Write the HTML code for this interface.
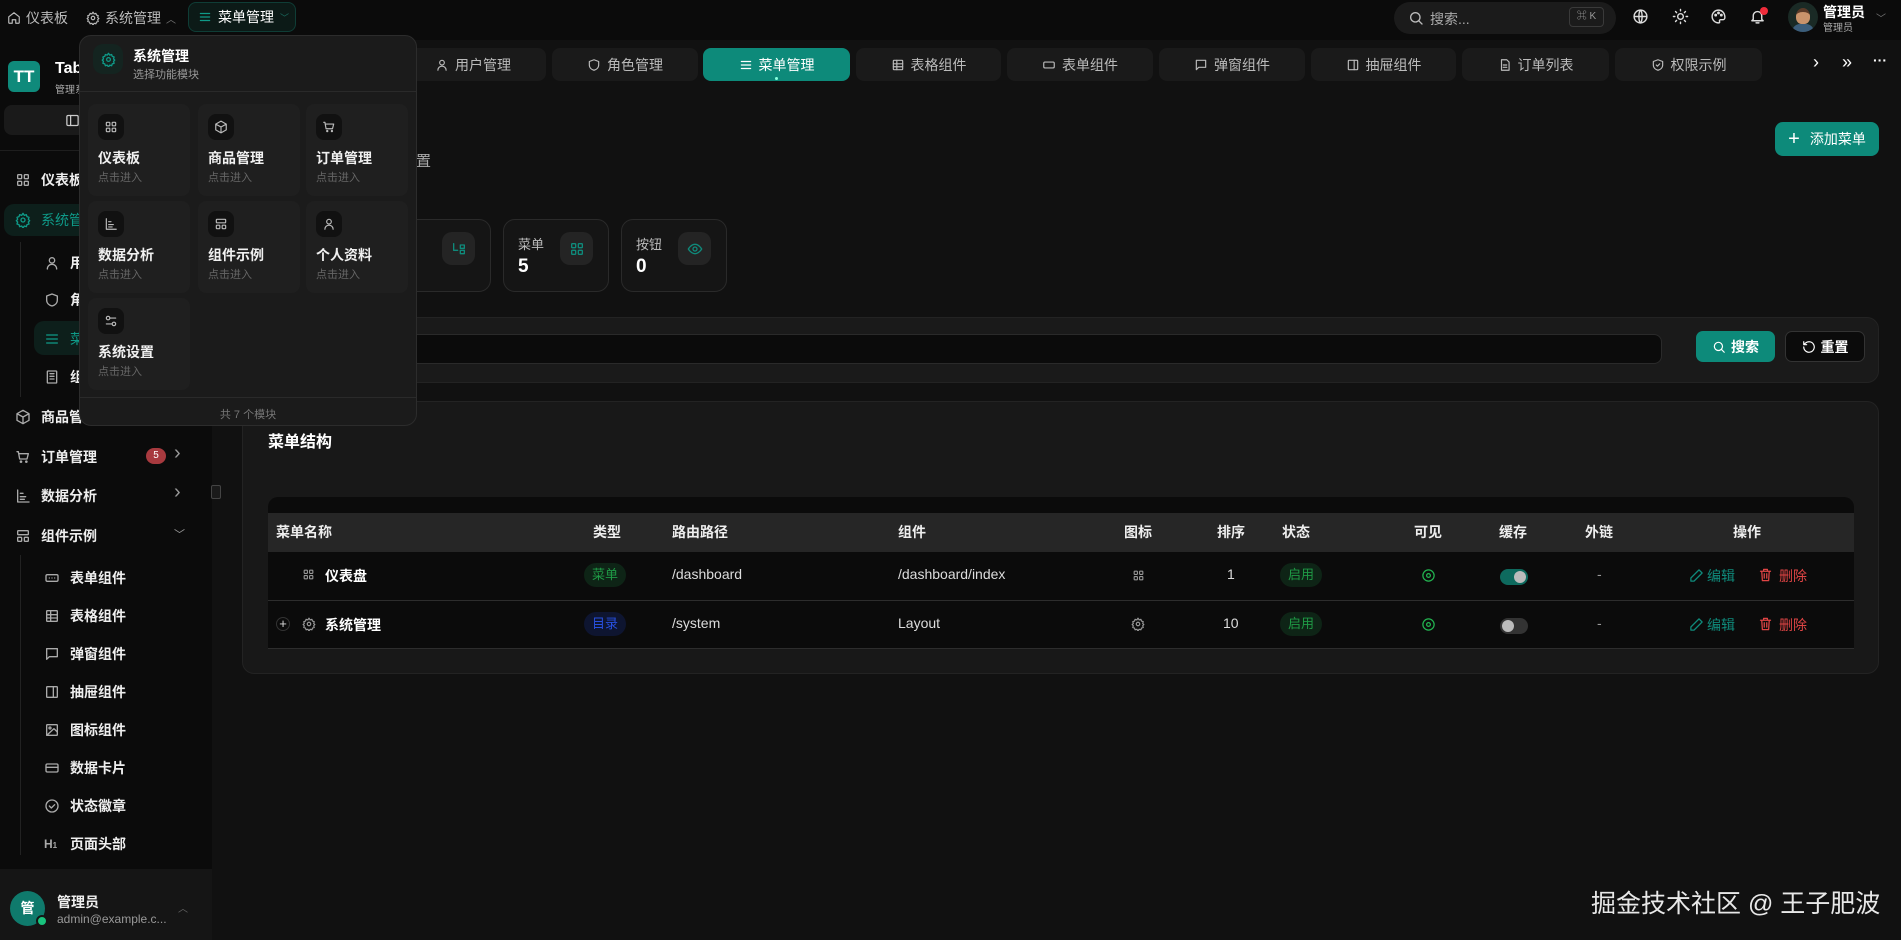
<!DOCTYPE html>
<html><head><meta charset="utf-8"><style>
*{margin:0;padding:0;box-sizing:border-box}
body{width:1901px;height:940px;overflow:hidden;background:#111;font-family:"Liberation Sans","Noto Sans CJK SC",sans-serif;color:#e8e8e8;position:relative;font-size:14px}
.a{position:absolute}
svg{fill:none;stroke:currentColor;stroke-width:2;stroke-linecap:round;stroke-linejoin:round}
.top{left:0;top:0;width:1901px;height:40px;background:#0b0b0b}
.side{left:0;top:40px;width:212px;height:900px;background:#0b0b0b}
.si{position:absolute;display:flex;align-items:center;gap:10px;font-size:14px;color:#eee;font-weight:bold}
.si svg{width:16px;height:16px;color:#aaa}
.tab{position:absolute;top:48px;height:33px;background:#1a1a1a;border-radius:8px;display:flex;align-items:center;justify-content:center;gap:6px;color:#bbb;font-size:14px}
.tab svg{width:14px;height:14px}
.card{position:absolute;top:219px;width:106px;height:73px;border:1px solid #2a2a2a;border-radius:12px;background:#151515}
.card .l{position:absolute;left:14px;top:14px;font-size:13px;color:#bbb}
.card .v{position:absolute;left:14px;top:36px;font-size:19px;font-weight:bold;color:#fff}
.card .ic{position:absolute;left:56px;top:12px;width:33px;height:33px;border-radius:10px;background:#242424;color:#0f8a7b;display:flex;align-items:center;justify-content:center}
.card .ic svg{width:16px;height:16px}
.th{position:absolute;top:513px;height:39px;line-height:39px;font-weight:bold;font-size:14px;color:#eee}
.td{position:absolute;font-size:14px;color:#ddd}
.dd{left:79px;top:35px;width:338px;height:391px;background:#1b1b1b;border:1px solid #2c2c2c;border-radius:12px}
.cell{position:absolute;width:102px;height:92px;background:#1f1f1f;border-radius:8px}
.cell .ib{position:absolute;left:10px;top:10px;width:26px;height:26px;border-radius:8px;background:#111;color:#bbb;display:flex;align-items:center;justify-content:center}
.cell .ib svg{width:14px;height:14px}
.cell .t{position:absolute;left:10px;top:44px;font-size:14px;font-weight:bold;color:#f0f0f0}
.cell .s{position:absolute;left:10px;top:65px;font-size:11px;color:#666}
.tag{position:absolute;height:24px;line-height:24px;padding:0 8px;border-radius:12px;font-size:13px}
</style></head><body>
<div class="a top"></div>
<div class="a" style="left:7px;top:8px;display:flex;align-items:center;gap:5px;color:#bbb;font-size:14px"><svg width="14" height="14" viewBox="0 0 24 24"><path d="M3 10l9-7 9 7v10a1 1 0 0 1-1 1h-5v-6H9v6H4a1 1 0 0 1-1-1z"/></svg>仪表板</div>
<div class="a" style="left:86px;top:8px;display:flex;align-items:center;gap:5px;color:#bbb;font-size:14px"><svg width="14" height="14" viewBox="0 0 24 24"><circle cx="12" cy="12" r="3"/><path d="M12 2l2 3 3-1 1 3 3 1-1 3 2 2-2 2 1 3-3 1-1 3-3-1-2 3-2-3-3 1-1-3-3-1 1-3-2-2 2-2-1-3 3-1 1-3 3 1z"/></svg>系统管理 <span style="font-size:10px;color:#777">︿</span></div>
<div class="a" style="left:188px;top:2px;width:108px;height:30px;border:1px solid #0f3d36;border-radius:8px;background:#0c1a17;display:flex;align-items:center;gap:6px;padding-left:9px;font-size:14px;color:#fff"><svg width="14" height="14" viewBox="0 0 24 24" style="color:#0f9a88"><path d="M4 6h16M4 12h16M4 18h16"/></svg>菜单管理 <span style="font-size:9px;color:#1a6a5e">﹀</span></div>
<div class="a" style="left:1394px;top:2px;width:222px;height:32px;border-radius:16px;background:#1b1b1b"></div>
<svg class="a" style="left:1408px;top:10px;color:#bbb" width="16" height="16" viewBox="0 0 24 24"><circle cx="11" cy="11" r="7"/><path d="M21 21l-5-5"/></svg>
<div class="a" style="left:1430px;top:9px;font-size:14px;color:#aaa">搜索...</div>
<div class="a" style="left:1569px;top:7px;width:35px;height:20px;border:1px solid #3a3a3a;border-radius:4px;font-size:10px;color:#999;text-align:center;line-height:18px">⌘ K</div>
<svg class="a" style="left:1632px;top:8px;color:#ddd" width="17" height="17" viewBox="0 0 24 24"><circle cx="12" cy="12" r="9"/><path d="M3 12h18M12 3c3 3 3 15 0 18M12 3c-3 3-3 15 0 18"/></svg>
<svg class="a" style="left:1672px;top:8px;color:#ddd" width="17" height="17" viewBox="0 0 24 24"><circle cx="12" cy="12" r="4"/><path d="M12 2v2M12 20v2M2 12h2M20 12h2M5 5l1.5 1.5M17.5 17.5L19 19M5 19l1.5-1.5M17.5 6.5L19 5"/></svg>
<svg class="a" style="left:1710px;top:8px;color:#ddd" width="17" height="17" viewBox="0 0 24 24"><path d="M12 3a9 9 0 1 0 0 18c1.5 0 2-1 1.5-2s0-2.5 1.5-2.5H18a3 3 0 0 0 3-3C21 7 17 3 12 3z"/><circle cx="8" cy="10" r="1"/><circle cx="12" cy="7" r="1"/><circle cx="16" cy="10" r="1"/></svg>
<svg class="a" style="left:1749px;top:8px;color:#ddd" width="17" height="17" viewBox="0 0 24 24"><path d="M6 16V11a6 6 0 0 1 12 0v5l2 2H4zM10 21h4"/></svg>
<div class="a" style="left:1760px;top:7px;width:8px;height:8px;border-radius:50%;background:#ef2b3a"></div>
<div class="a" style="left:1788px;top:2px;width:30px;height:30px;border-radius:50%;background:#1a2a25;overflow:hidden"><div style="margin:6px auto 0;width:14px;height:16px;border-radius:50% 50% 40% 40%;background:#c9936b;border-top:4px solid #5a3a28"></div><div style="margin:0 auto;width:22px;height:8px;border-radius:8px 8px 0 0;background:#3b5d7a"></div></div>
<div class="a" style="left:1823px;top:2px;font-size:14px;font-weight:bold;color:#fff">管理员</div>
<div class="a" style="left:1823px;top:19px;font-size:10px;color:#aaa">管理员</div>
<div class="a" style="left:1876px;top:10px;font-size:10px;color:#777">﹀</div>

<div class="a side"></div>
<div class="a" style="left:8px;top:61px;width:32px;height:31px;border-radius:6px;background:#0f8a7b;color:#fff;font-weight:bold;font-size:17px;text-align:center;line-height:31px">TT</div>
<div class="a" style="left:55px;top:60px;font-weight:bold;font-size:16px;color:#fff">Tab</div>
<div class="a" style="left:55px;top:81px;font-size:10px;color:#aaa">管理系</div>
<div class="a" style="left:4px;top:105px;width:204px;height:30px;border-radius:8px;background:#1a1a1a"></div>
<svg class="a" style="left:65px;top:113px;color:#ccc" width="15" height="15" viewBox="0 0 24 24"><rect x="3" y="4" width="18" height="16" rx="2"/><path d="M9 4v16"/></svg>
<div class="a" style="left:0;top:150px;width:212px;height:1px;background:#1e1e1e"></div>
<div class="si" style="left:15px;top:170px"><svg viewBox="0 0 24 24"><rect x="4" y="4" width="6" height="6" rx="1"/><rect x="14" y="4" width="6" height="6" rx="1"/><rect x="4" y="14" width="6" height="6" rx="1"/><rect x="14" y="14" width="6" height="6" rx="1"/></svg>仪表板</div>
<div class="a" style="left:4px;top:204px;width:202px;height:32px;border-radius:10px;background:#0d1f1b"></div>
<div class="si" style="left:15px;top:210px;color:#0f9a88;font-weight:normal"><svg viewBox="0 0 24 24" style="color:#0f9a88"><circle cx="12" cy="12" r="3"/><path d="M12 2l2 3 3-1 1 3 3 1-1 3 2 2-2 2 1 3-3 1-1 3-3-1-2 3-2-3-3 1-1-3-3-1 1-3-2-2 2-2-1-3 3-1 1-3 3 1z"/></svg>系统管理</div>
<div class="a" style="left:20px;top:242px;width:1px;height:155px;background:#222"></div>
<div class="si" style="left:44px;top:253px"><svg viewBox="0 0 24 24"><circle cx="12" cy="8" r="4"/><path d="M5 21c0-4 3-7 7-7s7 3 7 7"/></svg>用</div>
<div class="si" style="left:44px;top:290px"><svg viewBox="0 0 24 24"><path d="M12 3l8 3v6c0 5-4 8-8 9-4-1-8-4-8-9V6z"/></svg>角</div>
<div class="a" style="left:34px;top:321px;width:172px;height:34px;border-radius:10px;background:#0d1f1b"></div>
<div class="si" style="left:44px;top:329px;color:#0f9a88;font-weight:normal"><svg viewBox="0 0 24 24" style="color:#0f9a88"><path d="M4 6h16M4 12h16M4 18h16"/></svg>菜</div>
<div class="si" style="left:44px;top:367px"><svg viewBox="0 0 24 24"><rect x="5" y="3" width="14" height="18" rx="1"/><path d="M9 7h6M9 11h6M9 15h6"/></svg>组</div>
<div class="si" style="left:15px;top:407px"><svg viewBox="0 0 24 24"><path d="M12 2l9 5v10l-9 5-9-5V7z M3 7l9 5 9-5M12 12v10"/></svg>商品管</div>
<div class="si" style="left:15px;top:447px"><svg viewBox="0 0 24 24"><path d="M3 4h2l2 11h11l2-8H6"/><circle cx="9" cy="19" r="1"/><circle cx="17" cy="19" r="1"/></svg>订单管理</div>
<div class="a" style="left:146px;top:448px;width:20px;height:16px;border-radius:8px;background:#a83a3f;color:#fff;font-size:10px;text-align:center;line-height:16px">5</div>
<div class="a" style="left:174px;top:442px;color:#999;font-size:20px">›</div>
<div class="si" style="left:15px;top:486px"><svg viewBox="0 0 24 24"><path d="M4 3v18h17M8 8h4M8 13h8M8 17h6"/></svg>数据分析</div>
<div class="a" style="left:174px;top:481px;color:#999;font-size:20px">›</div>
<div class="a" style="left:211px;top:485px;width:10px;height:14px;border:1px solid #444;border-radius:2px;background:#1a1a1a"></div>
<div class="si" style="left:15px;top:526px"><svg viewBox="0 0 24 24"><rect x="4" y="4" width="16" height="6" rx="1"/><rect x="4" y="14" width="6" height="6" rx="1"/><rect x="14" y="14" width="6" height="6" rx="1"/></svg>组件示例</div>
<div class="a" style="left:174px;top:526px;color:#999;font-size:11px">﹀</div>
<div class="a" style="left:20px;top:555px;width:1px;height:300px;background:#222"></div>
<div class="si" style="left:44px;top:568px"><svg viewBox="0 0 24 24"><rect x="3" y="7" width="18" height="10" rx="2"/><path d="M8 12h.01M12 12h.01M16 12h.01"/></svg>表单组件</div>
<div class="si" style="left:44px;top:606px"><svg viewBox="0 0 24 24"><rect x="4" y="4" width="16" height="16" rx="1"/><path d="M4 10h16M4 15h16M10 4v16"/></svg>表格组件</div>
<div class="si" style="left:44px;top:644px"><svg viewBox="0 0 24 24"><path d="M4 4h16v12H8l-4 4z"/></svg>弹窗组件</div>
<div class="si" style="left:44px;top:682px"><svg viewBox="0 0 24 24"><rect x="4" y="4" width="16" height="16" rx="1"/><path d="M14 4v16"/></svg>抽屉组件</div>
<div class="si" style="left:44px;top:720px"><svg viewBox="0 0 24 24"><rect x="4" y="4" width="16" height="16" rx="1"/><circle cx="9" cy="9" r="1.5"/><path d="M20 15l-5-5-11 10"/></svg>图标组件</div>
<div class="si" style="left:44px;top:758px"><svg viewBox="0 0 24 24"><rect x="3" y="6" width="18" height="12" rx="2"/><path d="M3 11h18"/></svg>数据卡片</div>
<div class="si" style="left:44px;top:796px"><svg viewBox="0 0 24 24"><circle cx="12" cy="12" r="9"/><path d="M8 12l3 3 5-5"/></svg>状态徽章</div>
<div class="si" style="left:44px;top:834px"><span style="width:16px;color:#aaa;font-size:12px;font-weight:bold">H<small style="font-size:8px">1</small></span>页面头部</div>
<div class="a" style="left:0;top:869px;width:212px;height:71px;background:#151515"></div>
<div class="a" style="left:10px;top:891px;width:35px;height:35px;border-radius:50%;background:#0f7a6c;color:#fff;font-weight:bold;font-size:14px;text-align:center;line-height:35px">管</div>
<div class="a" style="left:36px;top:915px;width:12px;height:12px;border-radius:50%;background:#19c37d;border:2px solid #151515"></div>
<div class="a" style="left:57px;top:892px;font-size:14px;font-weight:bold;color:#eee">管理员</div>
<div class="a" style="left:57px;top:912px;font-size:12px;color:#999">admin@example.c...</div>
<div class="a" style="left:178px;top:900px;font-size:10px;color:#666">︿</div>

<div class="tab" style="left:400px;width:146px"><svg viewBox="0 0 24 24"><circle cx="12" cy="8" r="4"/><path d="M5 21c0-4 3-7 7-7s7 3 7 7"/></svg>用户管理</div>
<div class="tab" style="left:552px;width:146px"><svg viewBox="0 0 24 24"><path d="M12 3l8 3v6c0 5-4 8-8 9-4-1-8-4-8-9V6z"/></svg>角色管理</div>
<div class="tab" style="left:703px;width:147px;background:#0d8a7a;color:#fff"><svg viewBox="0 0 24 24"><path d="M4 6h16M4 12h16M4 18h16"/></svg>菜单管理</div>
<div class="a" style="left:775px;top:77px;width:3px;height:3px;border-radius:50%;background:#8fd"></div>
<div class="tab" style="left:856px;width:145px"><svg viewBox="0 0 24 24"><rect x="4" y="4" width="16" height="16" rx="1"/><path d="M4 10h16M4 15h16M10 4v16"/></svg>表格组件</div>
<div class="tab" style="left:1007px;width:146px"><svg viewBox="0 0 24 24"><rect x="3" y="7" width="18" height="10" rx="2"/></svg>表单组件</div>
<div class="tab" style="left:1159px;width:146px"><svg viewBox="0 0 24 24"><path d="M4 4h16v12H8l-4 4z"/></svg>弹窗组件</div>
<div class="tab" style="left:1311px;width:145px"><svg viewBox="0 0 24 24"><rect x="4" y="4" width="16" height="16" rx="1"/><path d="M14 4v16"/></svg>抽屉组件</div>
<div class="tab" style="left:1462px;width:147px"><svg viewBox="0 0 24 24"><path d="M6 3h9l4 4v14H6zM9 12h6M9 16h6"/></svg>订单列表</div>
<div class="tab" style="left:1615px;width:147px"><svg viewBox="0 0 24 24"><path d="M12 3l8 3v6c0 5-4 8-8 9-4-1-8-4-8-9V6z"/><path d="M9 12l2 2 4-4"/></svg>权限示例</div>
<div class="a" style="left:1813px;top:52px;font-size:18px;color:#fff">›</div>
<div class="a" style="left:1842px;top:52px;font-size:18px;color:#fff">»</div>
<div class="a" style="left:1873px;top:52px;font-size:14px;color:#fff;font-weight:bold">···</div>

<div class="a" style="left:416px;top:150px;font-size:15px;color:#aaa">置</div>
<div class="a" style="left:1775px;top:122px;width:104px;height:34px;border-radius:8px;background:#0d8a7a;color:#fff;font-size:14px;display:flex;align-items:center;justify-content:center;gap:10px"><span style="font-size:20px;font-weight:300">+</span>添加菜单</div>
<div class="card" style="left:385px"><div class="l">录</div><div class="ic"><svg viewBox="0 0 24 24"><path d="M4 4v10h6M14 6h6v5h-6zM14 14h6v5h-6z"/></svg></div></div>
<div class="card" style="left:503px"><div class="l">菜单</div><div class="v">5</div><div class="ic"><svg viewBox="0 0 24 24"><rect x="4" y="4" width="6" height="6" rx="1"/><rect x="14" y="4" width="6" height="6" rx="1"/><rect x="4" y="14" width="6" height="6" rx="1"/><rect x="14" y="14" width="6" height="6" rx="1"/></svg></div></div>
<div class="card" style="left:621px"><div class="l">按钮</div><div class="v">0</div><div class="ic"><svg viewBox="0 0 24 24"><path d="M2 12s4-7 10-7 10 7 10 7-4 7-10 7S2 12 2 12z"/><circle cx="12" cy="12" r="3"/></svg></div></div>

<div class="a" style="left:242px;top:317px;width:1637px;height:66px;border:1px solid #232323;border-radius:12px;background:#1a1a1a"></div>
<div class="a" style="left:260px;top:334px;width:1402px;height:30px;border:1px solid #2a2a2a;border-radius:8px;background:#0b0b0b"></div>
<div class="a" style="left:1696px;top:331px;width:79px;height:31px;border-radius:7px;background:#0d8a7a;color:#fff;font-size:14px;display:flex;align-items:center;justify-content:center;gap:5px;font-weight:bold"><svg width="14" height="14" viewBox="0 0 24 24"><circle cx="11" cy="11" r="7"/><path d="M21 21l-5-5"/></svg>搜索</div>
<div class="a" style="left:1785px;top:331px;width:80px;height:31px;border-radius:7px;background:#0b0b0b;border:1px solid #333;color:#fff;font-size:14px;display:flex;align-items:center;justify-content:center;gap:5px;font-weight:bold"><svg width="14" height="14" viewBox="0 0 24 24"><path d="M3 12a9 9 0 1 0 3-6.7L3 8M3 3v5h5"/></svg>重置</div>

<div class="a" style="left:242px;top:401px;width:1637px;height:273px;border:1px solid #232323;border-radius:12px;background:#181818"></div>
<div class="a" style="left:268px;top:428px;font-size:16px;font-weight:bold;color:#fff">菜单结构</div>
<div class="a" style="left:268px;top:497px;width:1586px;height:152px;border-radius:10px 10px 0 0;background:#0b0b0b;overflow:hidden">
  <div class="a" style="left:0;top:16px;width:1586px;height:39px;background:#262626"></div>
  <div class="a" style="left:0;top:103px;width:1586px;height:1px;background:#2d2d2d"></div>
  <div class="a" style="left:0;top:151px;width:1586px;height:1px;background:#2d2d2d"></div>
</div>
<div class="th" style="left:276px">菜单名称</div>
<div class="th" style="left:593px">类型</div>
<div class="th" style="left:672px">路由路径</div>
<div class="th" style="left:898px">组件</div>
<div class="th" style="left:1124px">图标</div>
<div class="th" style="left:1217px">排序</div>
<div class="th" style="left:1282px">状态</div>
<div class="th" style="left:1414px">可见</div>
<div class="th" style="left:1499px">缓存</div>
<div class="th" style="left:1585px">外链</div>
<div class="th" style="left:1733px">操作</div>
<svg class="a" style="left:302px;top:568px;color:#999" width="13" height="13" viewBox="0 0 24 24"><rect x="4" y="4" width="6" height="6" rx="1"/><rect x="14" y="4" width="6" height="6" rx="1"/><rect x="4" y="14" width="6" height="6" rx="1"/><rect x="14" y="14" width="6" height="6" rx="1"/></svg>
<div class="td" style="left:325px;top:566px;font-weight:bold;color:#fff">仪表盘</div>
<div class="tag" style="left:584px;top:563px;background:#0e2416;color:#1f9a45">菜单</div>
<div class="td" style="left:672px;top:566px">/dashboard</div>
<div class="td" style="left:898px;top:566px">/dashboard/index</div>
<svg class="a" style="left:1132px;top:569px;color:#999" width="13" height="13" viewBox="0 0 24 24"><rect x="4" y="4" width="6" height="6" rx="1"/><rect x="14" y="4" width="6" height="6" rx="1"/><rect x="4" y="14" width="6" height="6" rx="1"/><rect x="14" y="14" width="6" height="6" rx="1"/></svg>
<div class="td" style="left:1227px;top:566px">1</div>
<div class="tag" style="left:1280px;top:563px;background:#0e2416;color:#1f9a45">启用</div>
<svg class="a" style="left:1421px;top:568px;color:#22b350" width="15" height="15" viewBox="0 0 24 24"><circle cx="12" cy="12" r="9"/><circle cx="12" cy="12" r="3"/></svg>
<div class="a" style="left:1500px;top:569px;width:28px;height:16px;border-radius:8px;background:#0e6a5e"><div style="position:absolute;right:2px;top:2px;width:12px;height:12px;border-radius:50%;background:#bbb"></div></div>
<div class="td" style="left:1597px;top:566px;color:#999">-</div>
<svg class="a" style="left:1689px;top:568px;color:#0f8a7b" width="15" height="15" viewBox="0 0 24 24"><path d="M16 3l5 5L8 21H3v-5z"/></svg>
<div class="td" style="left:1707px;top:566px;color:#0f8a7b">编辑</div>
<svg class="a" style="left:1758px;top:567px;color:#e04545" width="15" height="16" viewBox="0 0 24 24"><path d="M4 6h16M9 6V3h6v3M6 6l1 15h10l1-15M10 10v7M14 10v7"/></svg>
<div class="td" style="left:1779px;top:566px;color:#e04545">删除</div>
<div class="a" style="left:276px;top:617px;width:14px;height:14px;border-radius:50%;border:1px solid #333;color:#ddd;font-size:13px;line-height:12px;text-align:center">+</div>
<svg class="a" style="left:302px;top:617px;color:#999" width="14" height="14" viewBox="0 0 24 24"><circle cx="12" cy="12" r="3"/><path d="M12 2l2 3 3-1 1 3 3 1-1 3 2 2-2 2 1 3-3 1-1 3-3-1-2 3-2-3-3 1-1-3-3-1 1-3-2-2 2-2-1-3 3-1 1-3 3 1z"/></svg>
<div class="td" style="left:325px;top:615px;font-weight:bold;color:#fff">系统管理</div>
<div class="tag" style="left:584px;top:612px;background:#0e1530;color:#2750e0">目录</div>
<div class="td" style="left:672px;top:615px">/system</div>
<div class="td" style="left:898px;top:615px">Layout</div>
<svg class="a" style="left:1131px;top:617px;color:#999" width="14" height="14" viewBox="0 0 24 24"><circle cx="12" cy="12" r="3"/><path d="M12 2l2 3 3-1 1 3 3 1-1 3 2 2-2 2 1 3-3 1-1 3-3-1-2 3-2-3-3 1-1-3-3-1 1-3-2-2 2-2-1-3 3-1 1-3 3 1z"/></svg>
<div class="td" style="left:1223px;top:615px">10</div>
<div class="tag" style="left:1280px;top:612px;background:#0e2416;color:#1f9a45">启用</div>
<svg class="a" style="left:1421px;top:617px;color:#22b350" width="15" height="15" viewBox="0 0 24 24"><circle cx="12" cy="12" r="9"/><circle cx="12" cy="12" r="3"/></svg>
<div class="a" style="left:1500px;top:618px;width:28px;height:16px;border-radius:8px;background:#333"><div style="position:absolute;left:2px;top:2px;width:12px;height:12px;border-radius:50%;background:#bbb"></div></div>
<div class="td" style="left:1597px;top:615px;color:#999">-</div>
<svg class="a" style="left:1689px;top:617px;color:#0f8a7b" width="15" height="15" viewBox="0 0 24 24"><path d="M16 3l5 5L8 21H3v-5z"/></svg>
<div class="td" style="left:1707px;top:615px;color:#0f8a7b">编辑</div>
<svg class="a" style="left:1758px;top:616px;color:#e04545" width="15" height="16" viewBox="0 0 24 24"><path d="M4 6h16M9 6V3h6v3M6 6l1 15h10l1-15M10 10v7M14 10v7"/></svg>
<div class="td" style="left:1779px;top:615px;color:#e04545">删除</div>

<div class="a" style="left:1591px;top:884px;font-size:25px;color:#e8e8e8">掘金技术社区 @ 王子肥波</div>

<div class="a dd">
  <div class="a" style="left:13px;top:8px;width:30px;height:30px;border-radius:10px;background:#142420;color:#0f9a88;display:flex;align-items:center;justify-content:center"><svg width="15" height="15" viewBox="0 0 24 24"><circle cx="12" cy="12" r="3"/><path d="M12 2l2 3 3-1 1 3 3 1-1 3 2 2-2 2 1 3-3 1-1 3-3-1-2 3-2-3-3 1-1-3-3-1 1-3-2-2 2-2-1-3 3-1 1-3 3 1z"/></svg></div>
  <div class="a" style="left:53px;top:10px;font-size:14px;font-weight:bold;color:#fff">系统管理</div>
  <div class="a" style="left:53px;top:30px;font-size:11px;color:#999">选择功能模块</div>
  <div class="a" style="left:0;top:55px;width:336px;height:1px;background:#2a2a2a"></div>
  <div class="cell" style="left:8px;top:68px"><div class="ib"><svg viewBox="0 0 24 24"><rect x="4" y="4" width="6" height="6" rx="1"/><rect x="14" y="4" width="6" height="6" rx="1"/><rect x="4" y="14" width="6" height="6" rx="1"/><rect x="14" y="14" width="6" height="6" rx="1"/></svg></div><div class="t">仪表板</div><div class="s">点击进入</div></div>
  <div class="cell" style="left:118px;top:68px"><div class="ib"><svg viewBox="0 0 24 24"><path d="M12 2l9 5v10l-9 5-9-5V7z M3 7l9 5 9-5M12 12v10"/></svg></div><div class="t">商品管理</div><div class="s">点击进入</div></div>
  <div class="cell" style="left:226px;top:68px"><div class="ib"><svg viewBox="0 0 24 24"><path d="M3 4h2l2 11h11l2-8H6"/><circle cx="9" cy="19" r="1"/><circle cx="17" cy="19" r="1"/></svg></div><div class="t">订单管理</div><div class="s">点击进入</div></div>
  <div class="cell" style="left:8px;top:165px"><div class="ib"><svg viewBox="0 0 24 24"><path d="M4 3v18h17M8 8h4M8 13h8M8 17h6"/></svg></div><div class="t">数据分析</div><div class="s">点击进入</div></div>
  <div class="cell" style="left:118px;top:165px"><div class="ib"><svg viewBox="0 0 24 24"><rect x="4" y="4" width="16" height="6" rx="1"/><rect x="4" y="14" width="6" height="6" rx="1"/><rect x="14" y="14" width="6" height="6" rx="1"/></svg></div><div class="t">组件示例</div><div class="s">点击进入</div></div>
  <div class="cell" style="left:226px;top:165px"><div class="ib"><svg viewBox="0 0 24 24"><circle cx="12" cy="8" r="4"/><path d="M5 21c0-4 3-7 7-7s7 3 7 7"/></svg></div><div class="t">个人资料</div><div class="s">点击进入</div></div>
  <div class="cell" style="left:8px;top:262px"><div class="ib"><svg viewBox="0 0 24 24"><circle cx="7" cy="7" r="3"/><circle cx="17" cy="17" r="3"/><path d="M11 7h9M4 17h9"/></svg></div><div class="t">系统设置</div><div class="s">点击进入</div></div>
  <div class="a" style="left:0;top:361px;width:336px;height:1px;background:#2a2a2a"></div>
  <div class="a" style="left:0;top:370px;width:336px;text-align:center;font-size:11px;color:#777">共 7 个模块</div>
</div>
</body></html>
